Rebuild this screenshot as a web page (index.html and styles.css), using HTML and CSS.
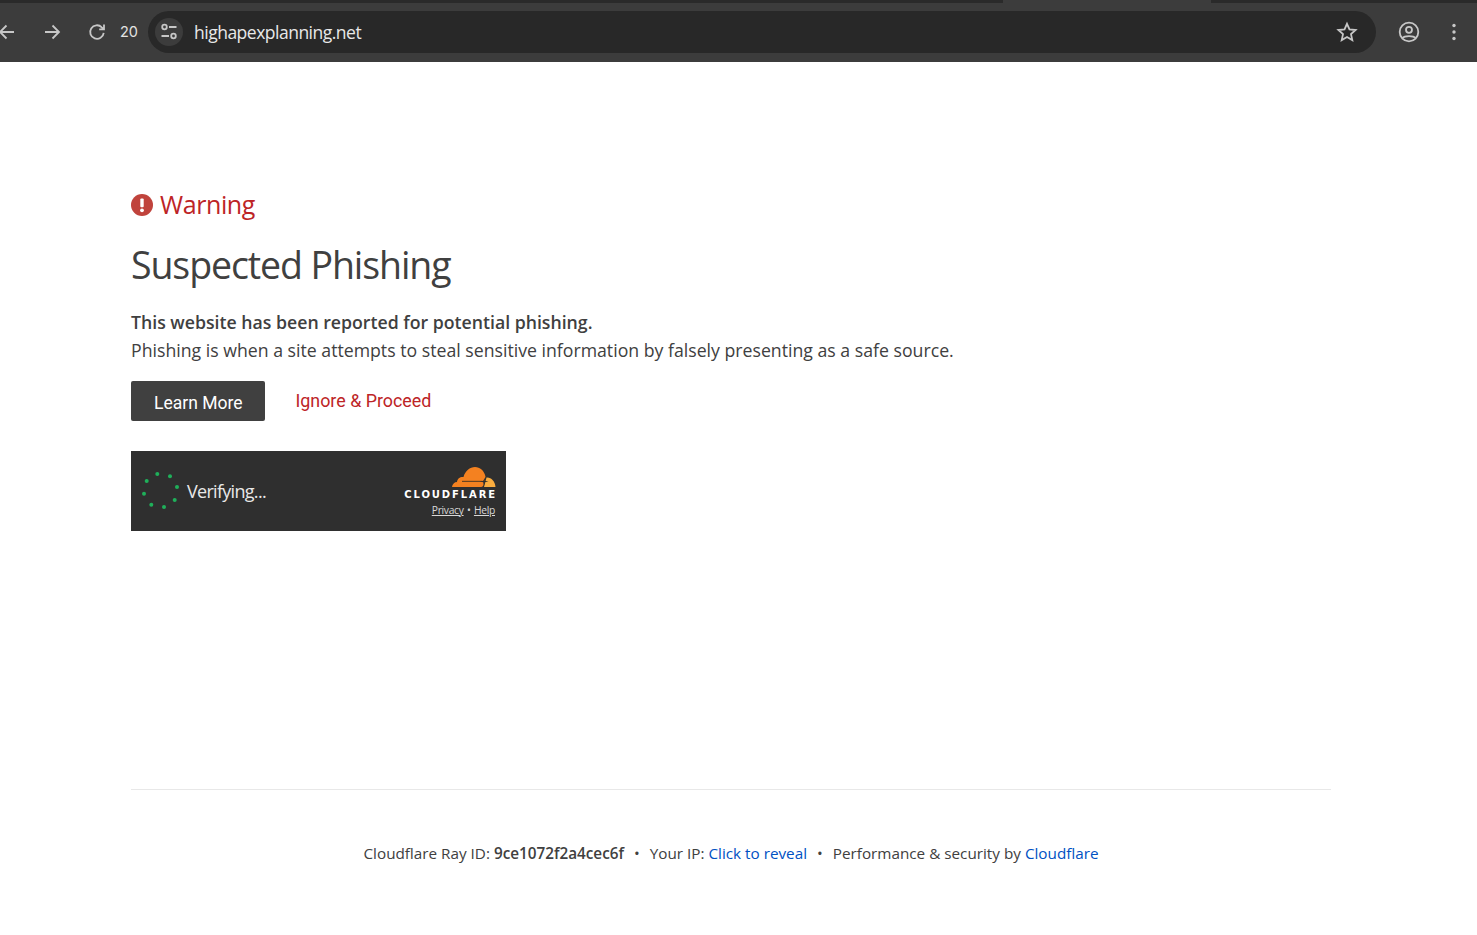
FILE: index.html
```html
<html>
<head>
    <meta charset="UTF-8">
    <title>Suspected Phishing</title>
    <link rel="stylesheet" href="styles.css">
</head>
<body>

    <!-- Browser toolbar -->
    <div class="toolbar">
        <span class="tab-sliver"></span>
        <svg class="nav-icon back" width="24" height="24" viewBox="0 0 24 24"><path d="M19 12H5M11.5 5.500 5 12l6.500 6.500"/></svg>
        <svg class="nav-icon forward" width="24" height="24" viewBox="0 0 24 24"><path d="M5 12h14M12.500 5.500 19 12l-6.500 6.500"/></svg>
        <svg class="nav-icon reload" width="24" height="24" viewBox="0 0 24 24"><path d="M18.700 12.800a6.800 6.800 0 1 1-1.900-5.500L19 9.400M19 4.600v4.800h-4.800"/></svg>
        <span class="zoom-count">20</span>
        <div class="address-bar">
            <span class="tune-btn">
                <svg class="nav-icon" width="20" height="20" viewBox="0 0 20 20"><circle cx="5.500" cy="5" r="2.300"/><path d="M10 5h7.500M2.500 14H10"/><circle cx="14.500" cy="14" r="2.300"/></svg>
            </span>
            <span class="url">highapexplanning.net</span>
            <svg class="nav-icon star" width="24" height="24" viewBox="0 0 24 24"><path d="m12 3.800 2.500 5.600 6.100.600-4.600 4.100 1.300 6-5.300-3.100-5.300 3.100 1.300-6L3.400 10l6.100-.600z"/></svg>
        </div>
        <svg class="nav-icon profile" width="24" height="24" viewBox="0 0 24 24"><circle cx="12" cy="12" r="9.300"/><circle cx="12" cy="9.800" r="3"/><path d="M5.500 18c2-2.600 11-2.600 13 0"/></svg>
        <svg class="menu-icon" width="6" height="20" viewBox="0 0 6 20"><circle cx="3" cy="3.500" r="1.700"/><circle cx="3" cy="10" r="1.700"/><circle cx="3" cy="16.500" r="1.700"/></svg>
    </div>

    <div class="page">
        <div class="warning">
            <svg class="warning-icon" width="22" height="22" viewBox="0 0 22 22"><circle cx="11" cy="11" r="11" fill="#c0433c"/><rect x="9.300" y="4.500" width="3.400" height="8.800" rx="1" fill="#fff"/><circle cx="11" cy="16.300" r="1.900" fill="#fff"/></svg>
            <span class="warning-text">Warning</span>
        </div>
        <h1>Suspected Phishing</h1>
        <p class="lead"><strong>This website has been reported for potential phishing.</strong><br>Phishing is when a site attempts to steal sensitive information by falsely presenting as a safe source.</p>

        <div class="actions">
            <a class="btn" href="#">Learn More</a>
            <a class="ignore" href="#">Ignore &amp; Proceed</a>
        </div>

        <div class="widget">
            <svg class="spinner" width="40" height="40" viewBox="0 0 40 40">
                <circle cx="17.300" cy="3" r="2"/><circle cx="30" cy="5.300" r="2"/><circle cx="37" cy="16" r="2"/><circle cx="34.700" cy="29" r="2"/>
                <circle cx="24" cy="36" r="2"/><circle cx="11.300" cy="33.700" r="2"/><circle cx="4" cy="22.700" r="2"/><circle cx="6.700" cy="10" r="2"/>
            </svg>
            <span class="verifying">Verifying...</span>
            <div class="cf-brand">
                <svg width="46" height="22" viewBox="0 0 46 22">
                    <path fill="#f48120" d="M1 21c.3-3 2.500-5 5-5 .3-3.500 3.500-5.500 6.500-5C14 5 19 1 24 1c5 0 9 3.500 10.500 9.500L33 17c-.4 2.500-1.200 4-3 4z"/>
                    <path fill="#faad3f" d="M35.500 11.500c4.500-.5 8.500 3.500 9 9.500H33z"/>
                    <path fill="#6b4420" d="M11 14.800h20v1.200H11z"/>
                    <path fill="#2f2f2f" d="M34.500 11l-.8 3.700 3.800.8-3.800.8-.7 3.700-.8-3.700-3.500-.8 3.500-.8z"/>
                </svg>
                <div class="cf-name">CLOUDFLARE</div>
                <div class="cf-links"><a href="#">Privacy</a> <span class="sep">•</span> <a href="#">Help</a></div>
            </div>
        </div>

        <div class="footer">
            Cloudflare Ray ID: <strong>9ce1072f2a4cec6f</strong><span class="bullet">•</span>Your IP: <a href="#">Click to reveal</a><span class="bullet">•</span>Performance &amp; security by <a href="#">Cloudflare</a>
        </div>
    </div>

</body>
</html>
```

FILE: styles.css
```css
body { font-family: "Open Sans", "Noto Sans", sans-serif; background-color: #fff; color: #404040; margin: 0; overflow: hidden; }
a { text-decoration: none; }

/* Browser toolbar */
.toolbar { position: relative; display: flex; align-items: center; box-sizing: border-box; height: 62px; padding-bottom: 2px; background-color: #3c3c3c; border-top: 3px solid #2a2a2a; }
.tab-sliver { position: absolute; top: -3px; left: 1003px; width: 208px; height: 3px; background-color: #3c3c3c; }
.nav-icon { fill: none; stroke: #c7c7c7; stroke-width: 1.800; flex: none; }
.back { margin-left: -5px; }
.forward { margin-left: 21px; }
.reload { margin-left: 21px; }
.zoom-count { margin-left: 11px; width: 17px; color: #e3e3e3; font: 14.500px "Inter", sans-serif; }
.address-bar { display: flex; align-items: center; box-sizing: border-box; width: 1228px; height: 42px; margin-left: 11px; padding: 0 17px 0 7px; background-color: #282828; border-radius: 21px; }
.tune-btn { display: flex; align-items: center; justify-content: center; width: 28px; height: 28px; background-color: #3c3c3c; border-radius: 50%; }
.url { flex: 1; margin-left: 11px; color: #e8e8e8; font: 17.500px "Open Sans", sans-serif; letter-spacing: -0.500px; }
.profile { margin-left: 21px; }
.menu-icon { fill: #c7c7c7; margin-left: 30px; }

/* Page content */
.page { padding: 0 146px 0 131px; }
.warning { display: flex; align-items: center; gap: 7px; height: 36px; margin-top: 124px; color: #bd2426; font-size: 25px; font-weight: 500; line-height: 36px; letter-spacing: -0.400px; }
.warning-icon { margin-top: 2px; }
h1 { margin: 18px 0 0; font-size: 37.500px; font-weight: 400; line-height: 50px; letter-spacing: -1.100px; color: #404040; }
.lead { margin: 18px 0 0; font-size: 17.700px; line-height: 28px; }
.lead strong { font-weight: 600; }
.actions { display: flex; align-items: flex-start; margin-top: 17px; }
.btn { display: block; padding: 0 23px; height: 40px; background-color: #404040; color: #fff; border-radius: 2px; font: 17.500px/44px Roboto, sans-serif; }
.ignore { margin-left: 30px; color: #bd2426; font: 17.850px/40px Roboto, sans-serif; }

/* Verify widget */
.widget { display: flex; align-items: center; box-sizing: border-box; width: 375px; height: 80px; margin-top: 30px; padding: 0 9px; background-color: #2f2f2f; }
.spinner { fill: #1fb05a; flex: none; }
.verifying { flex: 1; margin-left: 7px; color: #e8e8e8; font-size: 18px; letter-spacing: -0.700px; }
.cf-brand { display: flex; flex-direction: column; align-items: flex-end; }
.cf-name { color: #fff; font: bold 10px/14px "DejaVu Sans", sans-serif; letter-spacing: 1.900px; }
.cf-links { margin: 1px 2px 0 0; color: #d8d8d8; font-size: 10.300px; letter-spacing: -0.300px; line-height: 14px; }
.cf-links a { color: #d8d8d8; text-decoration: underline; }
.sep { margin: 0 1px; }

/* Footer */
.footer { margin-top: 258px; padding: 51px 0 0; border-top: 1px solid #e8e8e8; text-align: center; font-size: 15.270px; line-height: 24px; }
.footer strong { font-weight: 600; }
.footer a { color: #0051c3; }
.bullet { margin: 0 10px; }
```
